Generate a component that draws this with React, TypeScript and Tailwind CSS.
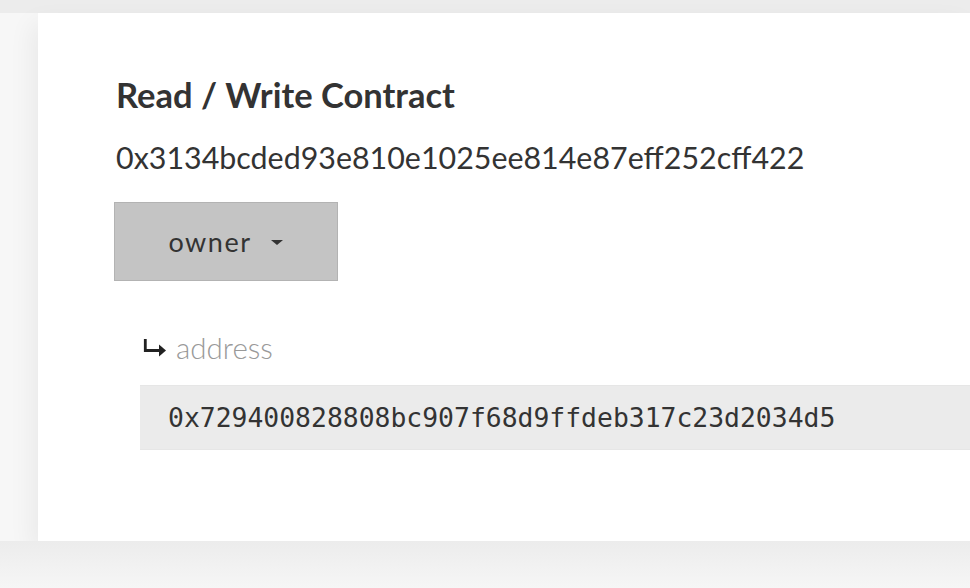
import React from 'react'

const lato = { fontFamily: 'Lato, "Noto Sans", sans-serif' }

function ReturnArrow() {
  return (
    <svg width="24" height="20" viewBox="0 0 24 20" className="shrink-0">
      <path d="M2.3 1 V12.5 H17" fill="none" stroke="#222" strokeWidth="2.8" />
      <path d="M16 6.5 L23 12.5 L16 18.5 Z" fill="#222" />
    </svg>
  )
}

function OwnerButton() {
  return (
    <button className="-ml-[2px] flex h-[79px] w-[224px] items-center justify-center gap-[20px] border border-[#b3b3b3] bg-[#c4c4c4] text-[#333]">
      <span className="text-[27px] leading-none tracking-[1.5px]">owner</span>
      <span className="mt-[3px] h-0 w-0 border-x-[6px] border-t-[5px] border-x-transparent border-t-[#333]" />
    </button>
  )
}

export default function App() {
  return (
    <div
      className="flex h-[588px] w-[970px] flex-col overflow-hidden bg-[#f7f7f7]"
      style={lato}
    >
      <div className="h-[13px] shrink-0 bg-[#ececec]" />
      <div className="flex pl-[38px]">
        <div className="flex h-[528px] flex-1 flex-col bg-white pl-[78px] pt-[65px] text-[#333] shadow-[-6px_10px_24px_rgba(0,0,0,0.06)]">
          <h1 className="text-[34.5px] font-bold leading-none">
            Read / Write Contract
          </h1>
          <div className="mt-[29px] text-[30.4px] leading-none">
            0x3134bcded93e810e1025ee814e87eff252cff422
          </div>
          <div className="mt-[30px]">
            <OwnerButton />
          </div>
          <div className="mt-[52px] pl-[24px]">
            <div className="flex items-center gap-[9px] pl-[3px]">
              <ReturnArrow />
              <span className="text-[29.5px] font-light leading-none text-[#999]">
                address
              </span>
            </div>
            <div className="mt-[23px] flex h-[65px] items-center border-y border-[#e6e6e6] bg-[#ebebeb] pl-[28px]">
              <span
                className="text-[26.4px] leading-none text-[#333]"
                style={{ fontFamily: '"DejaVu Sans Mono", monospace' }}
              >
                0x729400828808bc907f68d9ffdeb317c23d2034d5
              </span>
            </div>
          </div>
        </div>
      </div>
      <div className="flex-1 bg-gradient-to-b from-[#ececec] to-[#f6f6f6]" />
    </div>
  )
}
